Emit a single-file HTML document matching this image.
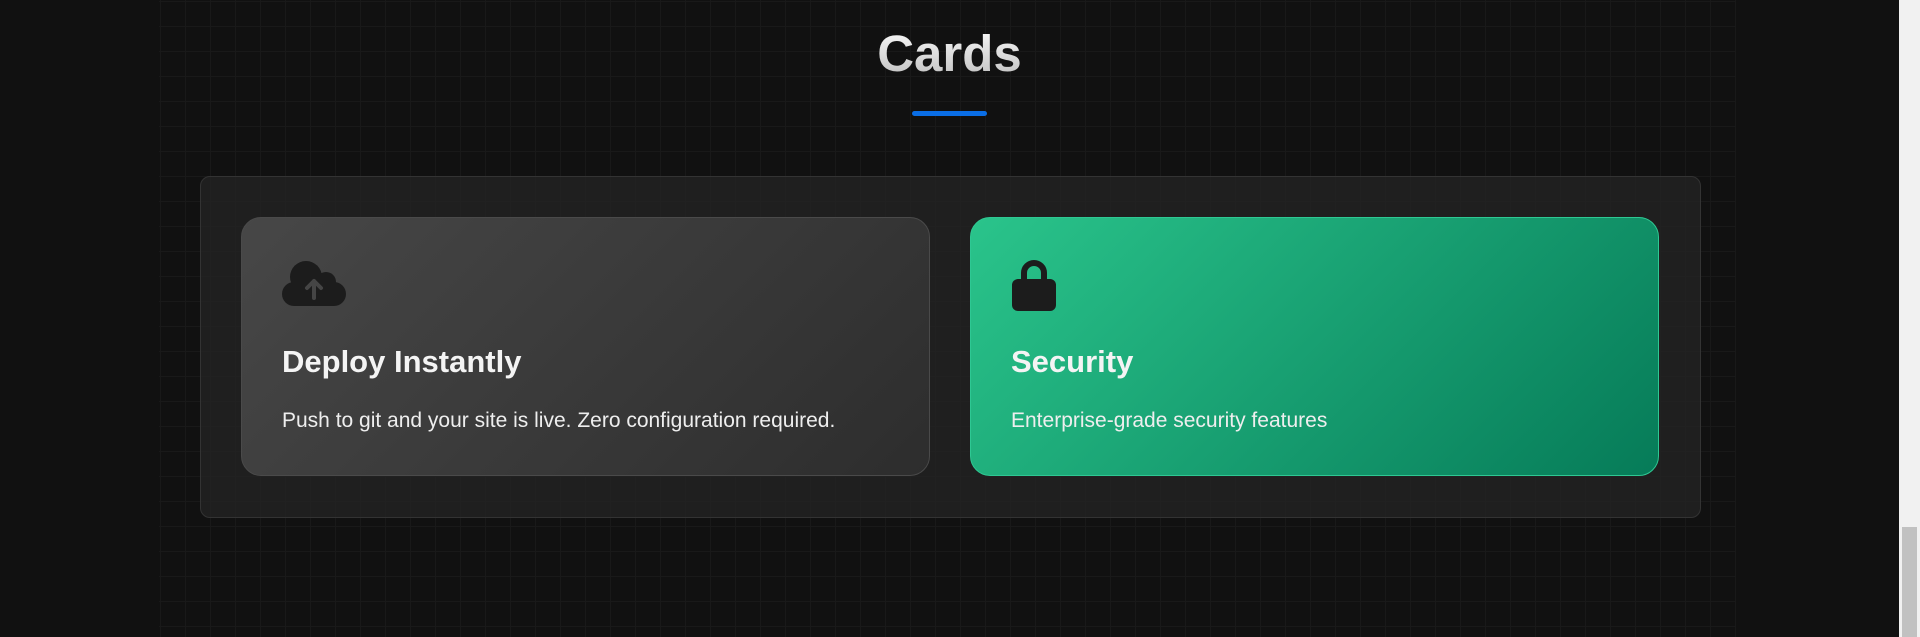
<!DOCTYPE html>
<html><head><meta charset="utf-8"><style>
html,body{margin:0;padding:0;width:1920px;height:637px;overflow:hidden;background:#111;font-family:"Liberation Sans",sans-serif}
.grid{position:absolute;left:159px;top:0;width:1577px;height:637px;
background-image:linear-gradient(to right,#191919 1px,transparent 1px),linear-gradient(to bottom,#191919 1px,transparent 1px);
background-size:25px 25px;background-position:1px 1px}
h1{position:absolute;left:0;width:1899px;top:24px;margin:0;text-align:center;font-size:51px;font-weight:bold;color:#eee;
background:linear-gradient(180deg,#fff,#bbb);-webkit-background-clip:text;color:transparent}
.bar{position:absolute;left:912px;top:111px;width:75px;height:5px;border-radius:3px;background:#0a6ee6}
.wrap{position:absolute;left:200px;top:176px;width:1499px;height:340px;border:1px solid #333;border-radius:10px;background:rgba(36,36,36,.75)}
.card{position:absolute;top:217px;width:689px;height:259px;border-radius:20px;box-sizing:border-box;padding:0 40px}
.c1{left:241px;background:linear-gradient(135deg,#474747,#2d2d2d);border:1px solid #4a4a4a}
.c2{left:970px;background:linear-gradient(135deg,#2ac48b,#067b58);border:1px solid #2ec893}
.card svg{position:absolute;left:40px;top:42px}
.card h3{position:absolute;left:40px;margin:0;font-size:31px;font-weight:bold;color:#f4f4f4}
.card p{position:absolute;left:40px;margin:0;font-size:21px;color:#eee}
.sb{position:absolute;left:1899px;top:0;width:21px;height:637px;background:#f1f1f1}
.th{position:absolute;left:1902px;top:527px;width:15px;height:110px;background:#c1c1c1}
</style></head><body>
<div class="grid"></div>
<h1>Cards</h1>
<div class="bar"></div>
<div class="wrap"></div>
<div class="card c1">
<svg width="64" height="46" viewBox="0 0 64 46"><g fill="#1c1c1c"><circle cx="24" cy="17" r="16"/><circle cx="44" cy="22" r="10"/><rect x="0" y="22" width="64" height="24" rx="12"/></g><path d="M32 38V21M25 28l7-7 7 7" stroke="#454545" stroke-width="4" fill="none" stroke-linecap="round" stroke-linejoin="round"/></svg>
<h3 style="top:126px">Deploy Instantly</h3>
<p style="top:191px">Push to git and your site is live. Zero configuration required.</p>
</div>
<div class="card c2">
<svg width="46" height="52" viewBox="0 0 46 52" style="top:41px"><path d="M13 22V14a10 10 0 0 1 20 0v8" stroke="#1c1c1c" stroke-width="6" fill="none"/><rect x="1" y="20" width="44" height="32" rx="6" fill="#1c1c1c"/></svg>
<h3 style="top:126px">Security</h3>
<p style="top:191px">Enterprise-grade security features</p>
</div>
<div class="sb"></div><div class="th"></div>
</body></html>
